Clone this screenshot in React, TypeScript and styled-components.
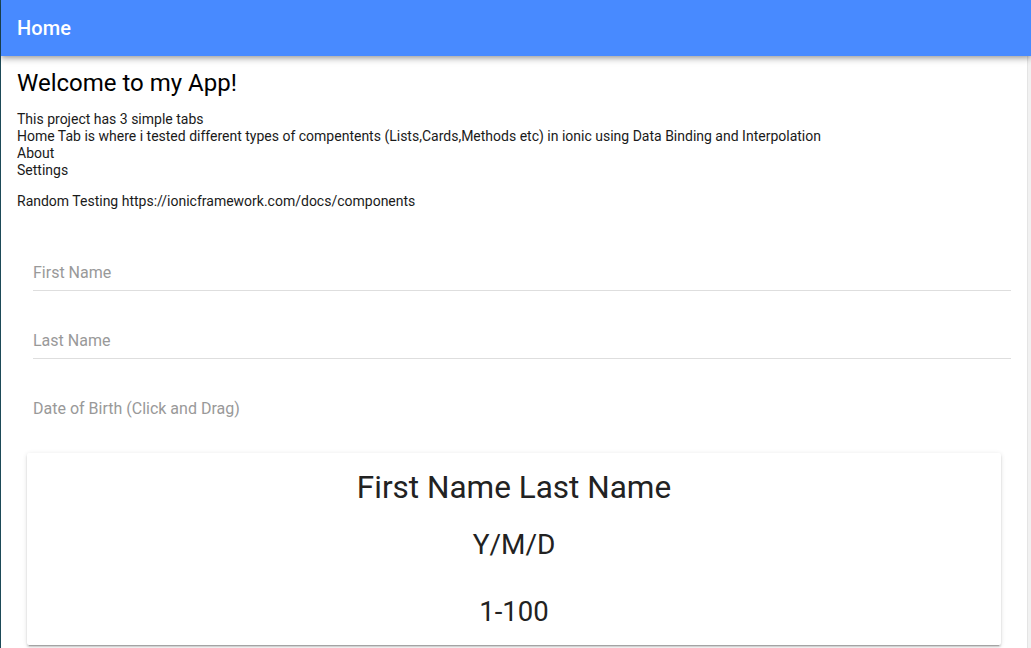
import React from "react";
import styled, { createGlobalStyle } from "styled-components";

const GlobalStyle = createGlobalStyle`
  html, body {
    margin: 0;
    padding: 0;
    height: 100%;
    overflow: hidden;
    background: #fff;
  }
  body {
    font-family: Roboto, "Liberation Sans", sans-serif;
    -webkit-font-smoothing: antialiased;
  }
`;

const AppShell = styled.div`
  display: flex;
  flex-direction: column;
  height: 648px;
  border-left: 1px solid #1d4a58;
  background: #fff;
`;

const Toolbar = styled.header`
  position: relative;
  z-index: 2;
  display: flex;
  align-items: center;
  height: 56px;
  flex-shrink: 0;
  padding: 0 16px;
  background: #488aff;
  box-shadow: 0 2px 4px -1px rgba(0, 0, 0, 0.2),
    0 4px 5px 0 rgba(0, 0, 0, 0.14), 0 1px 10px 0 rgba(0, 0, 0, 0.12);
`;

const ToolbarTitle = styled.div`
  color: #fff;
  font-size: 20px;
  font-weight: 500;
  letter-spacing: 0.1px;
`;

const Body = styled.div`
  flex: 1;
  display: flex;
  min-height: 0;
`;

const Content = styled.main`
  flex: 1;
  min-width: 0;
  overflow: hidden;
  padding: 16px;
  color: #000;
`;

// the page's scrollbar track along the right edge
const ScrollTrack = styled.div`
  width: 3px;
  flex-shrink: 0;
  background: #f1f1f1;
  border-left: 1px solid #e4e4e4;
`;

const PageHeading = styled.h2`
  margin: -3px 0 13px;
  font-size: 24px;
  font-weight: 400;
  line-height: 1.2;
`;

const Paragraph = styled.p<{ $after: number }>`
  margin: 0 0 ${(p) => p.$after}px;
  font-size: 14px;
  line-height: 17px;
  color: #1a1a1a;
`;

const FieldList = styled.div`
  margin: 0 0 26px;
  padding-left: 16px;
`;

const Field = styled.label<{ $last?: boolean }>`
  display: flex;
  align-items: flex-end;
  height: 68px;
  padding-bottom: 7px;
  box-sizing: border-box;
  border-bottom: 1px solid ${(p) => (p.$last ? "transparent" : "#dedede")};
`;

const FieldInput = styled.input`
  width: 100%;
  border: 0;
  outline: 0;
  padding: 0;
  font-family: inherit;
  font-size: 16px;
  line-height: 20px;
  color: #000;
  background: transparent;

  &::placeholder {
    color: #999;
  }
`;

const Card = styled.section`
  margin: 10px;
  padding: 16px 16px 17px;
  border-radius: 2px;
  background: #fff;
  text-align: center;
  color: #222;
  box-shadow: 0 2px 2px 0 rgba(0, 0, 0, 0.14),
    0 3px 1px -2px rgba(0, 0, 0, 0.2), 0 1px 5px 0 rgba(0, 0, 0, 0.12);
`;

const CardLine = styled.div<{ $size: number; $gap: number }>`
  font-size: ${(p) => p.$size}px;
  line-height: 1.2;
  margin-top: ${(p) => p.$gap}px;
`;

export default function App() {
  return (
    <>
      <GlobalStyle />
      <AppShell>
        <Toolbar>
          <ToolbarTitle>Home</ToolbarTitle>
        </Toolbar>
        <Body>
          <Content>
            <PageHeading>Welcome to my App!</PageHeading>
            <Paragraph $after={14}>
              This project has 3 simple tabs
              <br />
              Home Tab is where i tested different types of compentents
              (Lists,Cards,Methods etc) in ionic using Data Binding and
              Interpolation
              <br />
              About
              <br />
              Settings
            </Paragraph>
            <Paragraph $after={13}>
              Random Testing https://ionicframework.com/docs/components
            </Paragraph>
            <FieldList>
              <Field>
                <FieldInput placeholder="First Name" />
              </Field>
              <Field>
                <FieldInput placeholder="Last Name" />
              </Field>
              <Field $last>
                <FieldInput placeholder="Date of Birth (Click and Drag)" />
              </Field>
            </FieldList>
            <Card>
              <CardLine $size={31.5} $gap={0}>
                First Name Last Name
              </CardLine>
              <CardLine $size={28} $gap={21}>
                Y/M/D
              </CardLine>
              <CardLine $size={27.5} $gap={34}>
                1-100
              </CardLine>
            </Card>
          </Content>
          <ScrollTrack />
        </Body>
      </AppShell>
    </>
  );
}
